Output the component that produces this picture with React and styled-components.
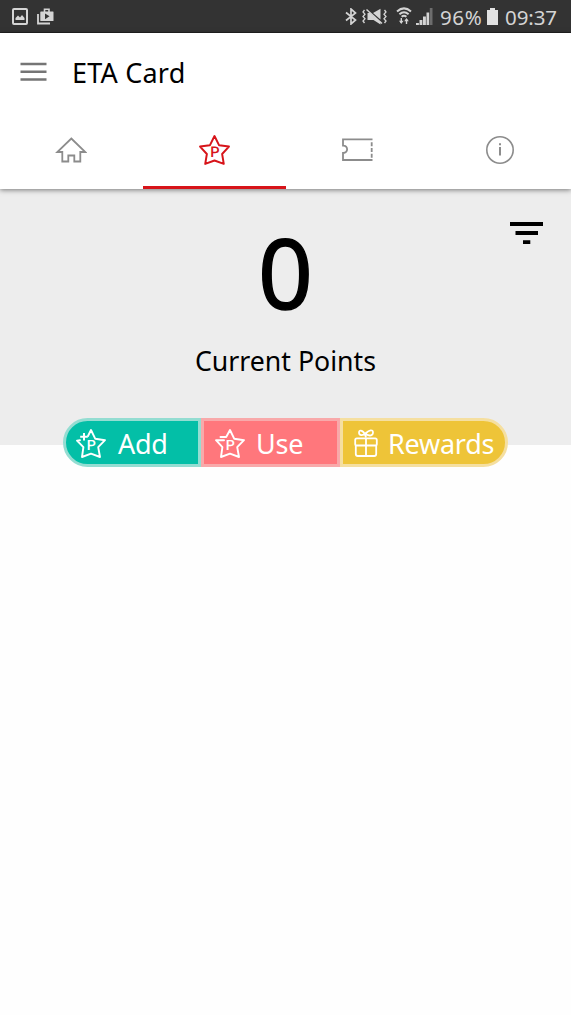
import React from "react";
import styled, { createGlobalStyle } from "styled-components";

const GlobalStyle = createGlobalStyle`
  * { box-sizing: border-box; }
  body { margin: 0; background: #fff; color: #000; font-family: "Noto Sans", sans-serif; }
  button { font: inherit; border: 0; padding: 0; background: none; }
  svg { display: block; flex: none; }
`;

const Screen = styled.div`
  width: 100%;
  height: 1015px;
  background: #fefefe;
  overflow: hidden;
`;

const StatusBar = styled.div`
  height: 33px;
  padding: 0 14px 0 12px;
  display: flex;
  align-items: center;
  justify-content: space-between;
  background: #333;
  border-bottom: 1px solid #222;
  color: #d4d4d4;
`;

const StatusGroup = styled.div`
  display: flex;
  align-items: center;
  gap: ${(p) => p.$gap || 0}px;
`;

const StatusText = styled.span`
  font-size: 20.5px;
  line-height: 32px;
  letter-spacing: ${(p) => p.$spacing || 0}px;
  width: ${(p) => p.$width}px;
  margin-left: ${(p) => p.$left}px;
  padding-top: 2px;
  white-space: nowrap;
`;

const AppBar = styled.header`
  position: relative;
  height: 156px;
  background: #fff;
  box-shadow: 0 1px 5px rgba(0, 0, 0, 0.5);
`;

const TitleRow = styled.div`
  height: 78px;
  display: flex;
  align-items: center;
  padding-left: 20px;
  gap: 25px;
`;

const Title = styled.h1`
  margin: 2px 0 0;
  font-size: 27px;
  line-height: 36px;
  font-weight: 400;
  letter-spacing: 0.2px;
`;

const Tabs = styled.nav`
  height: 78px;
  display: grid;
  grid-template-columns: repeat(4, 1fr);
`;

const Tab = styled.button`
  display: flex;
  align-items: center;
  justify-content: center;
  padding-top: 3px;
  color: ${(p) => (p.$active ? "#d7141a" : "#8c8c8c")};
  border-bottom: 3px solid ${(p) => (p.$active ? "#d7141a" : "transparent")};
`;

const Summary = styled.section`
  height: 256px;
  background: #ededed;
  display: grid;
  grid-template-columns: 1fr auto 1fr;
  padding: 0 28px;
`;

const Points = styled.div`
  grid-column: 2;
  text-align: center;
`;

const PointsValue = styled.div`
  font-size: 96px;
  line-height: 110px;
  margin-top: 28px;
  -webkit-text-stroke: 1.4px #000;
`;

const PointsLabel = styled.div`
  font-size: 26.7px;
  line-height: 36px;
  margin-top: 16px;
`;

const FilterButton = styled.button`
  justify-self: end;
  align-self: start;
  margin-top: 33px;
`;

const Actions = styled.div`
  position: relative;
  display: flex;
  justify-content: center;
  margin-top: -27px;
`;

const Action = styled.button`
  width: ${(p) => p.$width}px;
  height: 49px;
  display: flex;
  align-items: center;
  padding: 2px 0 0 ${(p) => p.$inset}px;
  gap: ${(p) => p.$gap}px;
  color: #fff;
  background: ${(p) => p.$fill};
  border: 3px solid ${(p) => p.$edge};
  border-radius: ${(p) => p.$radius || 0};
`;

const ActionLabel = styled.span`
  font-size: 27px;
  line-height: 36px;
  letter-spacing: -0.25px;
`;

function PictureIcon() {
  return (
    <svg width="16" height="17" viewBox="0 0 16 17">
      <rect x="1" y="1" width="14" height="15" rx="1" fill="none" stroke="currentColor" strokeWidth="2" />
      <path d="M3.5 12V10L6 7.5L8 9.5L10 7L12.5 10V12Z" fill="currentColor" />
    </svg>
  );
}

function PlayStoreIcon() {
  return (
    <svg width="17" height="17" viewBox="0 0 17 17">
      <path d="M1 6V15.5H13" fill="none" stroke="currentColor" strokeWidth="1.8" />
      <path d="M7.5 4V1.3H12V4" fill="none" stroke="currentColor" strokeWidth="1.6" />
      <path fillRule="evenodd" d="M4 3.5H16Q16.5 3.5 16.5 4V12.5Q16.5 13 16 13H4Q3.3 13 3.3 12.5V4Q3.3 3.5 4 3.5ZM8 5.4V11.2L12.5 8.3Z" fill="currentColor" />
    </svg>
  );
}

function BluetoothIcon() {
  return (
    <svg width="12" height="17" viewBox="0 0 12 17">
      <path d="M1 4.5L10.5 12L6 16V1L10.5 5L1 12.5" fill="none" stroke="currentColor" strokeWidth="1.7" />
    </svg>
  );
}

function VibrateMuteIcon() {
  return (
    <svg width="25" height="17" viewBox="0 0 25 17">
      <path d="M2.5 2L1 4L3 6.3L1 8.5L3 10.8L1 13L2.5 15M22.5 2L24 4L22 6.3L24 8.5L22 10.8L24 13L22.5 15" fill="none" stroke="currentColor" strokeWidth="1.3" />
      <path d="M5.5 5H8L18.5 14V16.5L11.5 12H5.5ZM11 5L18.5 0.8V11.5Z" fill="currentColor" />
      <path d="M4.5 1.5L20 15.5" stroke="currentColor" strokeWidth="1.5" />
    </svg>
  );
}

function WifiIcon() {
  return (
    <svg width="16" height="18" viewBox="0 0 16 18">
      <path d="M1 4.5Q8-1.7 15 4.5M3.4 7.3Q8 3.2 12.6 7.3M5.6 9.8Q8 7.8 10.4 9.8" fill="none" stroke="currentColor" strokeWidth="2" />
      <path d="M5.3 11V16M10.5 17V12" stroke="currentColor" strokeWidth="1.4" />
      <path d="M3 13.8H7.6L5.3 17ZM8.2 14.3H12.8L10.5 11Z" fill="currentColor" />
    </svg>
  );
}

function SignalIcon() {
  return (
    <svg width="17" height="17" viewBox="0 0 17 17">
      <path d="M0 17V15H2.9V17ZM3.5 17V12H6.4V17ZM7 17V8.5H9.9V17ZM10.5 17V4.5H13.2V17Z" fill="currentColor" />
      <path d="M13.8 17V0H16.5V17Z" fill="#6d6d6d" />
    </svg>
  );
}

function BatteryIcon() {
  return (
    <svg width="11" height="17" viewBox="0 0 11 17">
      <path d="M3 0H8V2H11V17H0V2H3Z" fill="#e2e2e2" />
    </svg>
  );
}

function MenuIcon() {
  return (
    <svg width="27" height="20" viewBox="0 0 27 20">
      <path d="M0.5 2H26.5M0.5 9.7H26.5M0.5 17.4H26.5" stroke="#757575" strokeWidth="2.5" />
    </svg>
  );
}

function HomeIcon() {
  return (
    <svg width="32" height="28" viewBox="0 0 32 28">
      <path d="M16.3 2.5L30.3 16H25.3V25.5H19.3V19.5H13.3V25.5H7.3V16H2.3Z" fill="none" stroke="currentColor" strokeWidth="1.8" />
    </svg>
  );
}

function StarIcon({ plus, dash, size = 32 }) {
  const outline = dash
    ? "M6.5 9H12.2L16 2L20.3 10.8L30 12.2L23.2 19.2L25 29L16 25.7L7 29L8.4 19.2L2 12.2L10 12.3"
    : plus
    ? "M13 8L16 2L20.3 10.8L30 12.2L23.2 19.2L25 29L16 25.7L7 29L8.4 19.2L2 12.6L5 12.2"
    : "M16 2L20.5 11L30 12.2L23.4 19.4L25 29L16 25.7L7 29L8.6 19.4L2 12.2L11.5 11Z";
  return (
    <svg width={size} height={size} viewBox="0 0 32 32">
      <path d={outline} fill="none" stroke="currentColor" strokeWidth="1.9" strokeLinejoin="round" strokeLinecap="round" />
      {plus && <path d="M9 5V12.6M5.2 8.8H12.8" stroke="currentColor" strokeWidth="2" />}
      <text x="16.3" y="22" textAnchor="middle" fontFamily="Roboto, sans-serif" fontSize="14.2" fontWeight="500" textRendering="geometricPrecision" fill="currentColor">P</text>
    </svg>
  );
}

function TicketIcon() {
  return (
    <svg width="32" height="24" viewBox="0 0 32 24">
      <path d="M31.5 1.3H2V7.6C7.5 7.3 7.5 15.3 2 15V22H31.5" fill="none" stroke="currentColor" strokeWidth="1.8" />
      <path d="M30.7 4.2V20" fill="none" stroke="currentColor" strokeWidth="1.8" strokeDasharray="4 1.8" />
    </svg>
  );
}

function InfoIcon() {
  return (
    <svg width="30" height="30" viewBox="0 0 30 30">
      <circle cx="15" cy="15" r="13.2" fill="none" stroke="currentColor" strokeWidth="1.6" />
      <path d="M15 12V20.5M15 8.3V10.3" stroke="currentColor" strokeWidth="2" />
    </svg>
  );
}

function FilterIcon() {
  return (
    <svg width="33" height="23" viewBox="0 0 33 23">
      <path d="M0 0H33V4H0ZM5.5 9H28V13H5.5ZM13 18.3H20.3V22H13Z" fill="#000" />
    </svg>
  );
}

function GiftIcon() {
  return (
    <svg width="24" height="30" viewBox="0 0 24 30">
      <g fill="none" stroke="currentColor" strokeWidth="1.8">
        <rect x="1.2" y="9.3" width="21.6" height="7.2" rx="1.6" />
        <path d="M1.8 16.5V25Q1.8 27 3.8 27H20.2Q22.2 27 22.2 25V16.5M12 9V27" />
        <path d="M12 8.5C10 1 5 0 5 3.5C5 7 9 7 12 4C15 1 19 0 19 3.5C19 7.5 13 7.5 11 3.4" />
      </g>
    </svg>
  );
}

export default function App() {
  return (
    <>
      <GlobalStyle />
      <Screen>
        <StatusBar>
          <StatusGroup $gap={9}>
            <PictureIcon />
            <PlayStoreIcon />
          </StatusGroup>
          <StatusGroup>
            <StatusGroup $gap={5}>
              <BluetoothIcon />
              <VibrateMuteIcon />
              <StatusGroup $gap={4}>
                <span />
                <WifiIcon />
                <SignalIcon />
              </StatusGroup>
            </StatusGroup>
            <StatusText $width={47} $left={7} $spacing={0.6}>96%</StatusText>
            <StatusGroup><BatteryIcon /></StatusGroup>
            <StatusText $width={52} $left={7} $spacing={-0.1}>09:37</StatusText>
          </StatusGroup>
        </StatusBar>
        <AppBar>
          <TitleRow>
            <MenuIcon />
            <Title>ETA Card</Title>
          </TitleRow>
          <Tabs>
            <Tab aria-label="Home"><HomeIcon /></Tab>
            <Tab aria-label="Points" $active><StarIcon size={33} /></Tab>
            <Tab aria-label="Coupons"><TicketIcon /></Tab>
            <Tab aria-label="Information"><InfoIcon /></Tab>
          </Tabs>
        </AppBar>
        <Summary>
          <Points>
            <PointsValue>0</PointsValue>
            <PointsLabel>Current Points</PointsLabel>
          </Points>
          <FilterButton aria-label="Filter"><FilterIcon /></FilterButton>
        </Summary>
        <Actions>
          <Action $width={138} $inset={9} $gap={11} $fill="#03bfa7" $edge="#94ddd2" $radius="25px 0 0 25px">
            <StarIcon plus />
            <ActionLabel>Add</ActionLabel>
          </Action>
          <Action $width={139} $inset={10} $gap={10} $fill="#ff777c" $edge="#f8a9aa">
            <StarIcon dash />
            <ActionLabel>Use</ActionLabel>
          </Action>
          <Action $width={168} $inset={11} $gap={10} $fill="#eec438" $edge="#f5dfa0" $radius="0 25px 25px 0">
            <GiftIcon />
            <ActionLabel>Rewards</ActionLabel>
          </Action>
        </Actions>
      </Screen>
    </>
  );
}
